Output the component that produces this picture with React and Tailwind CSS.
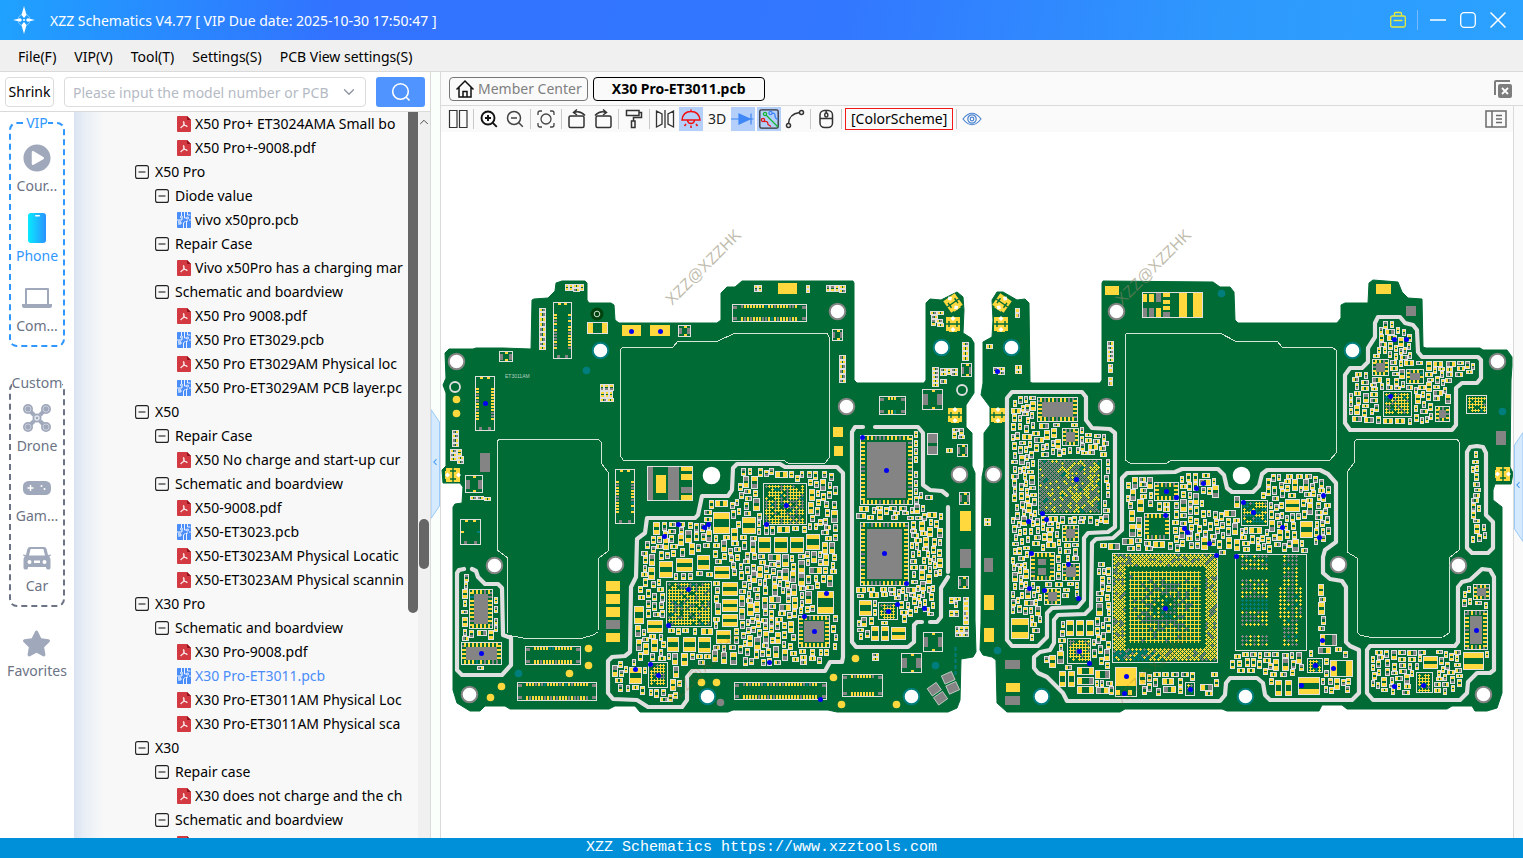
import { useState } from 'react';
import { FaPlayCircle, FaStar } from 'react-icons/fa';
import { ChevronDown, ChevronUp, ChevronLeft } from 'lucide-react';

const GREEN = '#006b35';
const GOLD = '#ffd83d';
const GRAY = '#848484';
const TEAL = '#007d7d';
const SILK = '#e0e0e0';

/* ---------- tree data ---------- */

const TREE = [
    { type: 'pdf', name: 'X50 Pro+ ET3024AMA Small bo' },
    { type: 'pdf', name: 'X50 Pro+-9008.pdf' },
    { type: 'model', name: 'X50 Pro' },
    { type: 'group', name: 'Diode value' },
    { type: 'pcb', name: 'vivo x50pro.pcb' },
    { type: 'group', name: 'Repair Case' },
    { type: 'pdf', name: 'Vivo x50Pro has a charging mar' },
    { type: 'group', name: 'Schematic and boardview' },
    { type: 'pdf', name: 'X50 Pro 9008.pdf' },
    { type: 'pcb', name: 'X50 Pro ET3029.pcb' },
    { type: 'pdf', name: 'X50 Pro ET3029AM Physical loc' },
    { type: 'pcb', name: 'X50 Pro-ET3029AM PCB layer.pc' },
    { type: 'model', name: 'X50' },
    { type: 'group', name: 'Repair Case' },
    { type: 'pdf', name: 'X50 No charge and start-up cur' },
    { type: 'group', name: 'Schematic and boardview' },
    { type: 'pdf', name: 'X50-9008.pdf' },
    { type: 'pcb', name: 'X50-ET3023.pcb' },
    { type: 'pdf', name: 'X50-ET3023AM Physical Locatic' },
    { type: 'pdf', name: 'X50-ET3023AM Physical scannin' },
    { type: 'model', name: 'X30 Pro' },
    { type: 'group', name: 'Schematic and boardview' },
    { type: 'pdf', name: 'X30 Pro-9008.pdf' },
    { type: 'pcb', name: 'X30 Pro-ET3011.pcb' },
    { type: 'pdf', name: 'X30 Pro-ET3011AM Physical Loc' },
    { type: 'pdf', name: 'X30 Pro-ET3011AM Physical sca' },
    { type: 'model', name: 'X30' },
    { type: 'group', name: 'Repair case' },
    { type: 'pdf', name: 'X30 does not charge and the ch' },
    { type: 'group', name: 'Schematic and boardview' },
    { type: 'pdf', name: '' }
];

/* ---------- board data ---------- */

const OUTLINES = [
    '445,353 449,349 473,349 476,348 503,348 531,349 532,300 534,299 548,298 555,291 556,283 562,281 585,281 587,283 587,300 589,303 611,303 614,305 615,320 619,323 717,323 721,320 721,293 727,287 735,287 742,281 853,281 854,283 854,380 857,383 924,383 926,380 926,303 930,299 941,300 957,292 963,297 964,310 963,333 971,338 974,343 974,393 966,405 966,427 972,433 972,466 975,473 975,620 976,652 973,657 961,659 960,700 957,708 948,712 837,712 828,710 733,710 728,712 640,712 635,706 615,706 609,709 510,709 505,706 485,706 480,711 470,711 457,703 453,690 453,507 455,504 462,503 463,487 460,483 443,483 442,470 446,466 446,393 443,385 446,378',
    '1102,283 1103,281 1213,282 1220,287 1230,287 1234,292 1235,320 1238,323 1337,323 1341,318 1341,305 1345,303 1368,303 1369,283 1373,280 1398,282 1402,292 1408,298 1422,299 1423,347 1426,348 1480,348 1483,350 1507,350 1512,357 1512,366 1511,380 1510,467 1513,473 1511,484 1495,484 1493,490 1493,500 1502,507 1502,693 1497,708 1487,711 1475,711 1472,706 1452,706 1447,709 1347,709 1342,705 1322,705 1319,711 1227,711 1222,709 1125,709 1120,712 1007,712 997,703 996,660 992,657 983,655 980,650 981,623 982,477 984,467 984,433 990,425 990,407 981,395 983,383 983,342 992,337 993,320 992,300 997,292 1003,292 1017,300 1025,299 1029,303 1030,382 1032,383 1100,383 1102,380'
];

const SHIELD_B = [[702,496],[698,515],[695,518],[647,518],[645,533],[637,539],[636,577],[631,587],[630,652],[625,656],[612,657],[608,661],[608,693],[613,699],[637,700],[648,707],[682,707],[687,700],[687,677],[692,671],[825,671],[830,662],[842,662],[843,657],[843,473],[837,467],[785,467],[780,464],[737,464],[733,468],[732,490],[728,496]];
const SHIELD_D = [[1007,398],[1012,392],[1082,392],[1086,397],[1086,420],[1092,428],[1110,429],[1115,433],[1115,527],[1108,532],[1088,533],[1084,538],[1084,600],[1078,607],[1052,608],[1047,613],[1047,637],[1038,646],[1012,646],[1007,640]];
const SHIELD_E = [[1034,657],[1040,652],[1050,650],[1054,643],[1054,620],[1058,615],[1085,614],[1091,608],[1092,543],[1096,539],[1113,538],[1122,530],[1122,478],[1127,473],[1175,472],[1182,469],[1218,469],[1224,475],[1227,488],[1232,492],[1253,492],[1259,486],[1262,474],[1267,470],[1320,470],[1328,474],[1336,483],[1336,542],[1325,550],[1323,557],[1323,573],[1330,579],[1342,581],[1346,587],[1346,642],[1350,646],[1359,650],[1359,693],[1352,700],[1270,700],[1265,695],[1263,683],[1257,678],[1230,678],[1226,683],[1225,695],[1220,701],[1067,701],[1063,693],[1047,677],[1038,673],[1034,668]];
const SHIELD_F = [[1375,323],[1378,317],[1400,317],[1405,323],[1413,325],[1417,330],[1418,352],[1422,357],[1478,357],[1481,360],[1481,378],[1477,383],[1462,383],[1456,388],[1456,425],[1452,430],[1350,430],[1345,423],[1345,375],[1350,368],[1362,368],[1368,362],[1368,348],[1375,337]];
const SHIELD_G = [[1467,452],[1470,447],[1477,446],[1483,447],[1486,453],[1486,515],[1493,522],[1493,548],[1488,553],[1472,553],[1467,548]];
const SHIELD_H = [[1367,650],[1370,646],[1455,646],[1458,642],[1458,587],[1462,582],[1470,580],[1482,569],[1490,570],[1494,577],[1494,670],[1490,673],[1477,673],[1468,682],[1467,693],[1460,700],[1373,700],[1367,693]];
const SHIELD_A = [[464,569],[459,570],[457,573],[457,670],[462,675],[502,675],[511,665],[511,638],[503,635],[502,588],[498,584],[485,584],[478,577],[476,571],[472,569]];
const REGION_C = [[852,427],[923,427],[923,485],[930,490],[947,492],[948,578],[941,588],[941,617],[937,622],[914,622],[914,647],[852,647]];

const SHIELD_CLOSED = [SHIELD_B, SHIELD_D, SHIELD_E, SHIELD_F, SHIELD_G, SHIELD_H];
const SHIELD_OPEN = [
    SHIELD_A,
    [[875,427],[918,427],[923,433],[923,485],[930,490],[942,491],[947,495]],
    [[948,507],[948,572]],
    [[948,577],[941,588],[941,617],[937,622],[930,622]],
    [[922,622],[917,622],[914,625],[914,642],[908,647],[856,647],[852,642],[852,432],[855,427],[863,427]]
];

const CAVITIES = [
    '620,350 623,347 673,347 678,341 718,341 735,333 827,333 829,337 829,458 825,463 788,463 783,460 623,460 620,455',
    '497,442 499,439 598,439 601,442 601,463 608,472 608,551 599,558 598,632 593,635 583,638 523,638 507,635 508,558 497,550',
    '1127,333 1220,333 1235,341 1277,341 1282,347 1332,347 1336,350 1336,453 1330,460 1172,460 1167,463 1130,463 1125,460 1125,335',
    '1357,439 1457,439 1459,442 1459,550 1449,558 1449,633 1443,637 1373,638 1360,635 1357,632 1357,558 1347,552 1347,472 1354,463 1354,442'
];

const HOLES = [
    [456,361,GRAY],[837,311,GRAY],[846,406,GRAY],[959,474,GRAY],[494,565,GRAY],[615,564,GRAY],[469,694,GRAY],
    [1116,311,GRAY],[1106,406,GRAY],[993,474,GRAY],[1338,564,GRAY],[1458,565,GRAY],[1483,694,GRAY],[1497,361,GRAY],
    [600,350,TEAL],[941,347,TEAL],[707,696,TEAL],[911,696,TEAL],[1011,347,TEAL],[1352,350,TEAL],[1041,696,TEAL],[1245,696,TEAL],
    [711,475,'#fff'],[1241,475,'#fff']
];

const BLUE_PINS = [[485,403],[631,331],[660,331],[862,437],[886,470],[884,553],[906,583],[786,505],[766,524],[708,524],[704,527],[826,593],[804,616],[814,631],[769,662],[820,699],[897,604],[888,611],[924,608],[678,524],[664,536],[688,589],[668,625],[650,664],[635,669],[658,675],[481,653],[997,371],[1076,479],[1042,513],[1046,519],[1028,521],[1031,553],[1068,564],[1029,588],[1044,590],[1078,598],[1079,651],[1089,663],[1165,608],[1126,676],[1124,693],[1190,689],[1216,555],[1236,556],[1166,491],[1176,497],[1165,515],[1184,528],[1187,532],[1209,543],[1196,488],[1203,483],[1243,502],[1253,512],[1394,339],[1406,339],[1390,396],[1323,495],[1282,527],[1319,537],[1322,640],[1315,665],[1333,668],[1301,685],[1476,630],[1394,686],[1423,685]];

const TEST_POINTS = [
    [456,399,GOLD],[456,413,GOLD],[588,648,GOLD],[588,665,GOLD],[569,673,GOLD],[501,686,GOLD],[490,697,GOLD],[855,658,GOLD],[833,677,GOLD],[841,704,GOLD],[896,704,GOLD],[716,682,GOLD],[701,682,GOLD],
    [720,702,GRAY],[586,370,TEAL],[518,673,TEAL],[935,665,TEAL],[1221,293,TEAL],[997,650,TEAL],[1502,411,TEAL]
];

const GOLD_PADS = [[622,325,19,11],[650,325,20,11],[778,283,19,11],[833,427,10,10],[834,446,9,10],[606,581,14,10],[606,594,14,10],[606,607,14,10],[606,633,14,9],[960,511,11,20],[984,595,10,15],[984,628,10,14],[1006,683,14,9],[1105,286,14,9],[1376,284,15,10],[1116,667,21,19],[1116,690,4,5],[1128,690,4,5],[656,475,10,18],[681,467,11,4],[681,474,11,6],[681,495,11,5],[1142,294,5,8],[1149,294,5,8],[1163,293,7,4],[1163,300,7,4],[1163,306,7,4],[1156,308,5,10],[1179,293,8,24],[1193,293,9,24]];
const GRAY_PADS = [[606,620,14,9],[960,549,11,19],[984,558,9,14],[1005,660,15,9],[1005,696,15,9],[1406,306,10,10],[1496,431,10,14],[480,453,10,19],[647,467,6,34],[668,467,11,34],[681,487,11,6],[928,433,9,10],[928,446,9,8],[1142,308,5,9],[1149,308,5,9],[1156,293,5,9],[1163,312,7,5]];
const FRAMES = [[647,466,46,35],[1142,292,61,26],[927,433,11,22],[1115,667,22,30]];

// x, y, w, h, then the centre pad inset
const QFNS = [[860,435,53,70,7],[860,522,49,64,7],[469,589,24,40,5],[461,642,41,23,5],[798,615,32,33,6],[1037,397,41,25,5],[1062,428,17,18,4],[1062,525,17,17,4],[1062,563,18,18,4],[1044,588,17,17,4],[1154,482,25,19,0],[1144,513,26,27,0],[1030,552,25,29,0],[1372,359,17,17,4],[1406,369,18,15,4],[1435,406,15,16,4],[1473,584,17,16,4],[1464,610,24,40,6]];

// x, y, w, h, share of gray, share of teal
const PLAIDS = [[763,483,44,42,0.25,0.08],[666,581,46,46,0.25,0.05],[648,662,20,26,0.2,0],[878,602,20,18,0.2,0],[1067,638,24,26,0.25,0],[1383,391,29,26,0.25,0.08],[1466,395,21,19,0.05,0.15],[1241,500,27,26,0.05,0.45],[1416,672,17,21,0.2,0.15],[1307,658,16,15,0.1,0.4],[1185,682,10,14,0.3,0.1]];

// x, y, w, h, vertical
const CONNECTORS = [[553,302,19,57,1],[475,376,20,55,1],[615,469,20,55,1],[732,304,75,18,0],[879,396,27,19,0],[525,646,56,19,0],[517,682,80,19,0],[734,682,93,18,0],[842,674,41,23,0],[460,519,21,26,1]];

const CRYSTALS = [[465,475,18,18],[922,389,21,21],[923,632,20,20],[901,653,21,20],[961,363,11,14],[957,444,11,13],[959,492,11,13],[958,576,11,13],[499,351,14,11],[678,325,13,12],[832,329,11,12]];

const BIG_CAPS = [[713,512,17,22],[742,517,14,17],[758,537,13,16],[774,537,14,16],[790,537,14,16],[806,534,14,16],[722,582,16,14],[722,599,16,13],[722,614,16,13],[716,630,15,14],[698,637,13,16],[714,566,16,13],[697,555,13,15],[817,591,17,23],[859,600,13,16],[891,627,15,13],[659,561,14,17],[676,558,17,14],[634,606,10,18],[647,620,16,13],[667,637,12,15],[683,637,13,15],[629,667,13,17],[1300,521,13,17],[1285,499,15,13],[1320,634,17,12],[1330,660,23,17],[1298,677,22,18],[1423,656,15,13],[1463,652,21,18],[1011,618,18,21],[1066,620,8,16],[1076,620,8,16],[1086,620,8,16],[1077,667,17,8],[1077,677,17,8],[1077,686,17,8],[1095,670,15,9],[587,322,21,12],[871,626,8,15],[881,626,8,15],[1059,671,7,16],[1068,671,7,16],[1275,680,7,16],[1285,680,7,16]];

// loose rows of small parts outside the shields
const STRIPS = [[539,308,8,42],[565,284,19,8],[600,384,15,19],[452,430,8,17],[450,449,15,15],[469,496,22,6],[754,285,11,8],[806,285,5,8],[826,285,22,8],[839,355,8,29],[930,311,15,8],[931,319,13,9],[962,342,8,19],[932,367,8,20],[940,368,20,10],[940,379,8,8],[952,428,14,12],[946,448,8,8],[963,597,7,28],[949,597,12,12],[949,610,12,10],[955,626,14,13],[872,653,9,8],[986,344,8,8],[1015,308,6,11],[993,367,12,8],[1015,365,8,11],[1107,341,8,23],[1108,364,6,12],[1108,377,6,12],[984,518,8,8]];

const CONTACTS = [[946,317,0],[948,408,0],[446,468,90],[994,317,0],[991,408,0],[1496,467,90],[946,296,-35],[995,296,35]];

const BLANKS = [[1220,555,14,105],[1309,545,9,105],[1096,552,16,10],[1326,586,16,46],[1140,664,90,8],[732,468,6,26],[925,500,20,12],[1204,498,30,12],[1196,672,14,12],[1348,384,6,8]];

function inside(poly, x, y) {
    let hit = false;
    for (let i = 0, j = poly.length - 1; i < poly.length; j = i++) {
        const [xi, yi] = poly[i];
        const [xj, yj] = poly[j];
        if ((yi > y) !== (yj > y) && x < ((xj - xi) * (y - yi)) / (yj - yi) + xi) hit = !hit;
    }
    return hit;
}

function buildBoard() {
    const layers = { fill: '', gold: '', gray: '', teal: '', silk: '' };
    const W = 1090;
    const taken = new Uint8Array(W * 720);
    let seed = 4021;
    const rnd = () => {
        seed = (seed + 0x6d2b79f5) | 0;
        let t = Math.imul(seed ^ (seed >>> 15), 1 | seed);
        t = (t + Math.imul(t ^ (t >>> 7), 61 | t)) ^ t;
        return ((t ^ (t >>> 14)) >>> 0) / 4294967296;
    };
    const rect = (layer, x, y, w, h) => {
        layers[layer] += `M${x} ${y}h${w}v${h}h${-w}z`;
    };
    const frame = (x, y, w, h) => {
        layers.silk += `M${x} ${y}h${w}v${h}h${-w}zM${x + 1} ${y + 1}v${h - 2}h${w - 2}v${-(h - 2)}z`;
    };
    const plus = (layer, x, y) => {
        rect(layer, x, y + 1, 3, 1);
        rect(layer, x + 1, y, 1, 3);
    };
    const mark = (x, y, w, h) => {
        for (let j = y; j < y + h; j++) for (let i = x; i < x + w; i++) taken[(j - 130) * W + i - 436] = 1;
    };
    const free = (x, y, w, h) => {
        for (let j = y; j < y + h; j++) for (let i = x; i < x + w; i++) if (taken[(j - 130) * W + i - 436]) return false;
        return true;
    };
    const pick = (gray, teal) => {
        const r = rnd();
        return r < gray ? 'gray' : r < gray + teal ? 'teal' : 'gold';
    };

    // two pads with the body between them
    const part = (x, y, w, h) => {
        const tone = rnd();
        const a = tone < 0.3 ? 'gray' : 'gold';
        const b = tone > 0.75 ? 'gray' : 'gold';
        frame(x, y, w, h);
        if (w >= h) {
            const p = Math.max(2, Math.floor((w - 2) * 0.4));
            rect(a, x + 1, y + 1, p, h - 2);
            rect(b, x + w - 1 - p, y + 1, p, h - 2);
        } else {
            const p = Math.max(2, Math.floor((h - 2) * 0.4));
            rect(a, x + 1, y + 1, w - 2, p);
            rect(b, x + 1, y + h - 1 - p, w - 2, p);
        }
    };

    const fillArea = (test, x0, y0, x1, y1, sizes, skip) => {
        for (let y = y0; y < y1; y++) {
            for (let x = x0; x < x1; x++) {
                if (taken[(y - 130) * W + x - 436]) continue;
                if (rnd() < skip) continue;
                const start = Math.floor(rnd() * sizes.length);
                for (let k = 0; k < 3; k++) {
                    const [w, h] = k === 2 ? sizes[0] : sizes[(start + k) % sizes.length];
                    if (x + w > x1 || y + h > y1 || !free(x, y, w, h) || !test(x, y, w, h)) continue;
                    part(x, y, w, h);
                    mark(x, y, w + (skip ? 1 : 0), h + (rnd() < 0.6 && skip ? 1 : 0));
                    break;
                }
            }
        }
    };

    const qfn = (x, y, w, h, inset) => {
        rect('fill', x, y, w, h);
        frame(x, y, w, h);
        const len = w > 22 ? 4 : 3;
        for (let i = x + 3; i < x + w - 4; i += 4) {
            rect(pick(0.3, 0.03), i, y + 1, 2, len);
            rect(pick(0.3, 0.03), i, y + h - 1 - len, 2, len);
        }
        for (let j = y + 3; j < y + h - 4; j += 4) {
            rect(pick(0.2, 0.03), x + 1, j, len, 2);
            rect(pick(0.2, 0.03), x + w - 1 - len, j, len, 2);
        }
        if (inset) rect('gray', x + inset, y + inset, w - inset * 2, h - inset * 2);
        mark(x - 1, y - 1, w + 2, h + 2);
    };

    QFNS.forEach((q) => qfn(...q));
    rect('gray', 1038, 559, 8, 6);
    rect('gray', 1038, 568, 8, 7);

    PLAIDS.forEach(([x, y, w, h, g, t]) => {
        frame(x, y, w, h);
        for (let j = y + 2; j < y + h - 3; j += 3) {
            for (let i = x + 2; i < x + w - 3; i += 3) if (rnd() > 0.1) plus(pick(g, t), i, j);
        }
        mark(x - 1, y - 1, w + 2, h + 2);
    });

    // staggered ball grids
    const stagger = (x, y, w, h, tone, skip) => {
        for (let j = 0; j < h - 3; j += 2) {
            for (let i = (j / 2) % 2 ? 2 : 0; i < w - 3; i += 4) {
                if (skip && skip(i, j)) continue;
                plus(tone(i, j), x + i, y + j);
            }
        }
    };
    frame(1038, 459, 64, 56);
    stagger(1039, 460, 63, 55, (i, j) => {
        const m = Math.sin(i * 0.35) + Math.cos(j * 0.3 + i * 0.1);
        if (m > 1.7) return 'teal';
        return rnd() < 0.1 + i / 180 ? 'gold' : 'gray';
    });
    mark(1037, 458, 66, 58);

    frame(1112, 553, 106, 110);
    stagger(1113, 554, 106, 109, (i, j) => {
        if (j > 94 && i < 50 && rnd() < 0.4) return 'teal';
        return rnd() < 0.8 ? 'gold' : 'gray';
    }, (i, j) => i > 11 && i < 91 && j > 10 && j < 94);
    for (let j = 0; j < 72; j += 4) {
        for (let i = 0; i < 70; i += 4) {
            const ring = Math.min(i, j, 68 - i, 68 - j);
            if (ring > 22 && rnd() < 0.25) continue;
            const tone = ring > 22 ? pick(0.25, 0.15) : pick(ring > 10 ? 0.5 : 0.15, 0);
            plus(tone, 1129 + i, 571 + j);
            if (ring <= 22) {
                rect(tone, 1132 + i, 572 + j, 1, 1);
                rect(tone, 1130 + i, 574 + j, 1, 1);
            }
        }
    }
    mark(1111, 552, 108, 112);

    frame(1235, 554, 72, 97);
    for (let j = 0; j < 92; j += 4) {
        const inBand = j < 15 || (j > 23 && j < 70) || j > 79;
        for (let i = 0; i < 28; i += 4) if (inBand) plus(j > 43 && j < 53 ? 'teal' : pick(0.4, 0.03), 1241 + i, 555 + j);
        for (let i = 0; i < 16; i += 4) plus(i === 8 ? 'gray' : pick(0.35, 0.1), 1283 + i, 555 + j);
        if (j > 28 && j < 64) {
            plus('gold', 1279, 555 + j);
            plus(pick(0.3, 0), 1299, 555 + j);
        }
    }
    mark(1234, 553, 75, 99);

    CONNECTORS.forEach(([x, y, w, h, vertical]) => {
        frame(x, y, w, h);
        if (vertical) {
            for (let j = y + 12; j < y + h - 11; j += 3) {
                rect(pick(0.2, 0.05), x + 1, j, 3, 2);
                rect(pick(0.3, 0.25), x + w - 4, j, 3, 2);
            }
            rect('gold', x + 5, y + 1, 3, 2);
            rect('gold', x + w - 8, y + 1, 3, 2);
            rect('gray', x + 4, y + h - 4, 3, 3);
            rect('gray', x + w - 7, y + h - 4, 3, 3);
        } else {
            for (let i = x + 9; i < x + w - 9; i += 3) {
                rect(pick(0.25, 0.05), i, y + 1, 2, 3);
                rect(pick(0.25, 0.03), i, y + h - 5, 2, 4);
            }
            rect('gray', x + 1, y + 2, 4, 3);
            rect('gray', x + w - 5, y + 2, 4, 3);
            rect('gray', x + 1, y + h - 5, 4, 3);
            rect('gray', x + w - 5, y + h - 5, 4, 3);
        }
    });

    CRYSTALS.forEach(([x, y, w, h]) => {
        frame(x, y, w, h);
        const p = Math.round(w * 0.22);
        rect('gray', x + 1, y + Math.round(h * 0.25), p, Math.round(h * 0.5));
        rect('gray', x + w - 1 - p, y + Math.round(h * 0.25), p, Math.round(h * 0.5));
        rect('gold', x + Math.round(w / 2) - 1, y + 1, 3, 2);
        rect('gold', x + Math.round(w / 2) - 1, y + h - 3, 3, 2);
    });

    BIG_CAPS.forEach(([x, y, w, h]) => {
        frame(x, y, w, h);
        if (h >= w - 4) {
            const p = Math.round(h * 0.27);
            rect('gold', x + 1, y + 1, w - 2, p);
            rect('gold', x + 1, y + h - 1 - p, w - 2, p);
        } else {
            const p = Math.round(w * 0.25);
            rect('gold', x + 1, y + 1, p, h - 2);
            rect(rnd() < 0.5 ? 'gray' : 'gold', x + w - 1 - p, y + 1, p, h - 2);
        }
        mark(x - 1, y - 1, w + 2, h + 2);
    });

    GOLD_PADS.forEach((r) => rect('gold', ...r));
    GRAY_PADS.forEach((r) => rect('gray', ...r));
    FRAMES.forEach(([x, y, w, h]) => {
        frame(x, y, w, h);
        mark(x - 1, y - 1, w + 2, h + 2);
    });
    BLANKS.forEach((r) => mark(...r));

    const small = [[5, 7], [8, 5], [5, 8], [12, 7], [7, 5], [7, 13], [13, 7], [6, 12], [7, 5], [5, 9], [4, 7]];
    const tiny = [[4, 7], [7, 5], [5, 8], [8, 5], [6, 10], [10, 6], [7, 4]];
    [[SHIELD_B, small], [SHIELD_D, tiny], [SHIELD_E, small], [SHIELD_F, tiny], [SHIELD_G, tiny], [SHIELD_H, tiny], [SHIELD_A, tiny], [REGION_C, tiny]].forEach(([poly, sizes]) => {
        const xs = poly.map((p) => p[0]);
        const ys = poly.map((p) => p[1]);
        const test = (x, y, w, h) => [[-4, -4], [w + 4, -4], [-4, h + 4], [w + 4, h + 4]].every(([dx, dy]) => inside(poly, x + dx, y + dy));
        fillArea(test, Math.min(...xs), Math.min(...ys), Math.max(...xs), Math.max(...ys), sizes, 0.7);
    });
    STRIPS.forEach(([x, y, w, h]) => fillArea(() => true, x, y, x + w, y + h, w <= 8 ? [[w - 1, 4], [w - 1, 5]] : [[4, 7], [7, 4], [5, 7]], 0));

    return layers;
}

const LAYERS = buildBoard();
const toPoints = (list) => list.map((p) => p.join(',')).join(' ');

const BoardView = () => (
    <svg
        viewBox="441 132 1072 706"
        preserveAspectRatio="xMinYMin meet"
        className="block h-full w-full"
        role="img"
        aria-label="X30 Pro-ET3011 board view"
    >
        {OUTLINES.map((pts) => (
            <polygon key={pts.slice(0, 7)} points={pts} fill={GREEN} stroke={GREEN} strokeWidth="1" strokeLinejoin="round" />
        ))}
        <g fill="none" stroke="#d5e5da" strokeWidth="1" shapeRendering="crispEdges">
            {CAVITIES.map((pts) => <polygon key={pts.slice(0, 7)} points={pts} />)}
        </g>
        <g fill="none" stroke={SILK} strokeWidth="4.2" strokeLinejoin="round" strokeLinecap="round">
            {SHIELD_CLOSED.map((list) => <polygon key={list[0].join()} points={toPoints(list)} />)}
            {SHIELD_OPEN.map((list) => <polyline key={list[0].join()} points={toPoints(list)} />)}
        </g>
        <g shapeRendering="crispEdges">
            <path d={LAYERS.fill} fill={GREEN} />
            <path d={LAYERS.teal} fill={TEAL} />
            <path d={LAYERS.gray} fill={GRAY} />
            <path d={LAYERS.gold} fill={GOLD} />
            <path d={LAYERS.silk} fill={SILK} />
        </g>
        {CONTACTS.map(([x, y, turn]) => (
            <g key={`${x}-${y}`} transform={`rotate(${turn} ${x + 7} ${y + 7})`}>
                <path d={`M${x} ${y}h14v14h-3v1h-8v-1h-3z`} fill={GOLD} />
                <path d={`M${x} ${y + 7}h14M${x + 3} ${y + 4}v6M${x + 11} ${y + 4}v6`} stroke={GREEN} strokeWidth="1.4" />
                <path d={`M${x + 7} ${y - 1}l2.5 2.5-2.5 2.5-2.5-2.5zM${x + 7} ${y + 10}l2.5 2.5-2.5 2.5-2.5-2.5z`} fill="#fff" />
            </g>
        ))}
        {[[937, 694, -35], [950, 683, -24]].map(([x, y, turn]) => (
            <g key={x} transform={`rotate(${turn} ${x} ${y})`} fill={GRAY} stroke={SILK} strokeWidth="0.7">
                <rect x={x - 5} y={y - 10} width="11" height="9" />
                <rect x={x - 5} y={y + 1} width="11" height="9" />
            </g>
        ))}
        <path d="M955.5 647v28" stroke={TEAL} strokeWidth="2" strokeDasharray="4 2" />
        {TEST_POINTS.map(([x, y, tone]) => <circle key={`${x}-${y}`} cx={x + 0.5} cy={y + 0.5} r="3.8" fill={tone} />)}
        {HOLES.map(([x, y, tone]) => <circle key={`${x}-${y}`} cx={x + 0.5} cy={y + 0.5} r="7.8" fill="#fff" stroke={tone} strokeWidth="2" />)}
        <g fill="none" stroke={SILK} strokeWidth="1.8">
            <circle cx="455" cy="387" r="5" />
            <circle cx="962" cy="390" r="5" />
        </g>
        <circle cx="597" cy="314" r="6.5" fill="#00420d" />
        <circle cx="597" cy="314" r="2.8" fill="none" stroke="#cfe0cf" strokeWidth="1" />
        {BLUE_PINS.map(([x, y]) => <circle key={`${x}-${y}`} cx={x + 0.5} cy={y + 0.5} r="2.5" fill="#0000f0" />)}
        <text x="505" y="378" fontSize="5" fill="#b9cfc0" className="font-['Liberation_Sans']">ET3011AM</text>
        <g className="font-['Liberation_Sans']" fontSize="16" fill="#8a8468" fillOpacity="0.55">
            <text transform="translate(672 306) rotate(-45)">XZZ@XZZHK</text>
            <text transform="translate(1122 306) rotate(-45)">XZZ@XZZHK</text>
        </g>
        <g className="font-['Liberation_Sans']" fontSize="16" fill="#8a5a10" fillOpacity="0.25">
            <text transform="translate(672 706) rotate(-45)">XZZ@XZZHK</text>
            <text transform="translate(1122 706) rotate(-45)">XZZ@XZZHK</text>
        </g>
    </svg>
);

/* ---------- icons ---------- */

const Line = ({ size = 20, color = '#333', width = 1.5, children }) => (
    <svg width={size} height={size} viewBox="0 0 20 20" fill="none" stroke={color} strokeWidth={width}>{children}</svg>
);

const Logo = () => (
    <svg width="24" height="30" viewBox="0 0 24 30" fill="#fff">
        <circle cx="12" cy="15" r="6" fill="none" stroke="#bfe3ff" strokeWidth="1" strokeOpacity="0.6" />
        <path d="M12 1l2.5 9-2.5 3-2.5-3zM12 29l2.5-9-2.5-3-2.5 3zM1 15l7.5-1.8L10 15l-1.5 1.8zM23 15l-7.5-1.8L14 15l1.500 1.8z" />
        <circle cx="12" cy="15" r="1" />
    </svg>
);

const PdfIcon = () => (
    <svg width="14" height="16" viewBox="0 0 14 16" className="shrink-0">
        <path d="M1 0h9l4 4v11a1 1 0 0 1-1 1H1a1 1 0 0 1-1-1V1a1 1 0 0 1 1-1z" fill="#d23940" />
        <path d="M10 0l4 4h-3a1 1 0 0 1-1-1z" fill="#8e1118" />
        <path d="M6.5 5.5c1.2 0 .6 2.5-.4 4.3-.8 1.5-1.9 2.4-2.3 1.9-.5-.8 1.8-2 3.7-2.2 1.5-.2 2.9.1 2.8.8-.1.8-1.6.1-2.6-1.1C6.8 8 5.8 5.5 6.5 5.5z" fill="none" stroke="#fff" strokeWidth="0.9" />
    </svg>
);

const PcbIcon = () => (
    <svg width="14" height="16" viewBox="0 0 14 16" className="shrink-0">
        <rect width="14" height="16" rx="1" fill="#4a8df8" />
        <g fill="none" stroke="#fff" strokeWidth="0.9">
            <path d="M4.5 0v4M7.5 0v6h2M10.5 0v3h3M0 8h5v-2M1 12h3v-2M6.5 16v-5l2-2M9.5 16V9h1.5M12 8h2" />
            <circle cx="4.5" cy="5" r="1" />
            <circle cx="10.5" cy="6" r="1" />
            <circle cx="2.5" cy="10" r="1" />
        </g>
    </svg>
);

const PhoneIcon = () => (
    <svg width="28" height="32" viewBox="0 0 28 32">
        <defs>
            <linearGradient id="phoneFill" x1="0" x2="1">
                <stop offset="0" stopColor="#08eaff" />
                <stop offset="1" stopColor="#2b92ff" />
            </linearGradient>
        </defs>
        <rect x="5" y="1" width="18" height="30" rx="3" fill="url(#phoneFill)" />
        <rect x="12" y="3" width="5" height="1.5" rx="0.7" fill="#fff" />
    </svg>
);

const LaptopIcon = () => (
    <svg width="30" height="22" viewBox="0 0 30 22" fill="#a0a8bb">
        <path d="M4 1h22a1 1 0 0 1 1 1v15h3v2q0 2-2 2H2q-2 0-2-2v-2h3V2a1 1 0 0 1 1-1zm1 2v14h20V3z" fillRule="evenodd" />
    </svg>
);

const DroneIcon = () => (
    <svg width="28" height="28" viewBox="0 0 28 28">
        <g fill="#a0a8bb">
            <circle cx="5" cy="5" r="5" /><circle cx="23" cy="5" r="5" />
            <circle cx="5" cy="23" r="5" /><circle cx="23" cy="23" r="5" />
            <circle cx="14" cy="14" r="4.5" />
        </g>
        <path d="M5 5l6 6M23 5l-6 6M5 23l6-6M23 23l-6-6" stroke="#a0a8bb" strokeWidth="4" />
        <g fill="none" stroke="#e4e7ee" strokeWidth="0.6">
            <circle cx="5" cy="5" r="3" /><circle cx="23" cy="5" r="3" />
            <circle cx="5" cy="23" r="3" /><circle cx="23" cy="23" r="3" />
            <circle cx="14" cy="14" r="2" strokeWidth="1.4" />
        </g>
    </svg>
);

const GamepadIcon = () => (
    <svg width="28" height="16" viewBox="0 0 28 16">
        <rect y="1" width="28" height="14" rx="5.5" fill="#a0a8bb" />
        <path d="M7.5 5v6M4.5 8h6" stroke="#fff" strokeWidth="1.5" />
        <circle cx="18.5" cy="6" r="1" fill="#fff" />
        <circle cx="21.5" cy="9" r="1" fill="#fff" />
    </svg>
);

const CarIcon = () => (
    <svg width="28" height="24" viewBox="0 0 28 24" fill="#a0a8bb">
        <path fillRule="evenodd" d="M7 1h14q2 0 2.6 2L25 9l3-.5q0 2-2 2 1.5 1 1.5 3V22q0 1.5-2 1.5T23 22v-1H5v1q0 1.5-2.2 1.5T.5 22v-8.5q0-2 1.5-3-2 0-2-2L3 9l1.4-6Q5 1 7 1zm.6 2L6 9.5h16L20.4 3zM6.5 14a2 2 0 1 0 0 4 2 2 0 0 0 0-4zm15 0a2 2 0 1 0 0 4 2 2 0 0 0 0-4zM11 14.5v2.5h6v-2.5z" />
    </svg>
);

const Collapse = () => (
    <button className="shrink-0" aria-label="Collapse">
        <svg width="14" height="14" viewBox="0 0 14 14" fill="none" stroke="#222" strokeWidth="1.1">
            <rect x="0.6" y="0.6" width="12.8" height="12.8" rx="2" />
            <path d="M3.5 7h7" />
        </svg>
    </button>
);

/* ---------- pieces ---------- */

const TreeRow = ({ item, selected, onSelect }) => {
    if (item.type === 'model') {
        return <div className="flex h-6 items-center gap-1.5 pl-[61px]"><Collapse />{item.name}</div>;
    }
    if (item.type === 'group') {
        return <div className="flex h-6 items-center gap-1.5 pl-[81px]"><Collapse />{item.name}</div>;
    }
    return (
        <button
            onClick={onSelect}
            className={`flex h-6 w-full items-center gap-1 pl-[103px] text-left ${selected ? 'text-[#4a8df8]' : ''}`}
        >
            {item.type === 'pdf' ? <PdfIcon /> : <PcbIcon />}
            <span>{item.name}</span>
        </button>
    );
};

const NavItem = ({ icon, label, active }) => (
    <button className={`flex flex-col items-center gap-1 leading-5 ${active ? 'text-[#2f97ff]' : 'text-[#6b7385]'}`}>
        <span className="flex h-7 items-center">{icon}</span>
        {label}
    </button>
);

const Tool = ({ label, active, children }) => (
    <button
        aria-label={label}
        className={`flex h-6 w-6 shrink-0 items-center justify-center ${active ? 'bg-[#b5cffb]' : ''}`}
    >
        {children}
    </button>
);

const Sep = () => <span className="mx-px h-5 w-px shrink-0 bg-[#c9c9c9]" />;

const Toolbar = () => (
    <div className="flex h-[26px] shrink-0 items-center gap-0.5 bg-[#fafafa] pl-[5px] pr-1.5">
        <Tool label="Split view"><Line width={1.2}><path d="M1.5 1.5h7.5v17H1.5zM11.5 1.5h7.5v17h-7.5z" /></Line></Tool>
        <Sep />
        <Tool label="Zoom in"><Line color="#111" width={1.9}><circle cx="9" cy="9" r="6.5" /><path d="M13.8 13.8l4 4M9 6v6M6 9h6" /></Line></Tool>
        <Tool label="Zoom out"><Line color="#444" width={1.5}><circle cx="9" cy="9" r="6.5" /><path d="M13.8 13.8l4 4M6 9h6" /></Line></Tool>
        <Sep />
        <Tool label="Fit"><Line color="#444" width={1.3}><circle cx="10" cy="10" r="5" /><path d="M2 6V4q0-2 2-2h2M14 2h2q2 0 2 2v2M18 14v2q0 2-2 2h-2M6 18H4q-2 0-2-2v-2" /></Line></Tool>
        <Sep />
        <Tool label="Rotate left"><Line><rect x="2" y="7" width="15" height="11.5" rx="1.5" /><path d="M7 3.5q6-2.5 11 3M10 .5L6.5 3.5 10 6" /></Line></Tool>
        <Tool label="Rotate right"><Line><rect x="3" y="7" width="15" height="11.5" rx="1.5" /><path d="M13 3.5q-6-2.5-11 3M10 .5l3.5 3L10 6" /></Line></Tool>
        <Sep />
        <Tool label="Paint"><Line><path d="M2.5 1.5H15v5H2.5zM15 3.5h2.5v5H9.5v3M7.5 12H11v6.5H7.5z" /></Line></Tool>
        <Sep />
        <Tool label="Mirror"><Line width={1.3}><path d="M10 1v18M1.5 2v16l5.5-3V5zM18.5 2v16l-5.5-3V5z" /></Line></Tool>
        <Tool label="Light" active><Line color="#f01010" width={1.5}><path d="M1 11q1-8.5 9-8.5T19 11zM6.5 11.5q.5 3 3.5 3t3.5-3M10 .5v2M10 16.5v2.5M5 15l-1.5 2M15 15l1.5 2" /></Line></Tool>
        <button className="h-6 w-6 shrink-0 text-center leading-6 text-[#222]">3D</button>
        <Tool label="Diode" active>
            <svg width="24" height="20" viewBox="0 0 24 20" fill="#3f86f6" stroke="#3f86f6" strokeWidth="1.2"><path d="M0 10h22.5M20 4.5v11" /><path d="M8 5l11 5-11 5z" /></svg>
        </Tool>
        <Tool label="Net colors" active>
            <Line width={1.3}>
                <path d="M12 .8H2.5A1.7 1.7 0 0 0 .8 2.5v15a1.7 1.7 0 0 0 1.7 1.7h15a1.7 1.7 0 0 0 1.7-1.7v-15A1.7 1.7 0 0 0 17.5 .8H12" />
                <path d="M7 6l12 12" stroke="#15b52d" /><circle cx="6" cy="5" r="1.6" stroke="#15b52d" />
                <circle cx="11.5" cy="4" r="1.6" stroke="#3f86f6" /><path d="M13 4.5q3-1 3 2t3 4" stroke="#3f86f6" />
                <circle cx="4" cy="11" r="1.6" stroke="#e01818" /><path d="M5 12.5q4-1 4 3l3 2" stroke="#e01818" />
            </Line>
        </Tool>
        <Tool label="Route"><Line><circle cx="3.5" cy="16.5" r="2" /><circle cx="16.5" cy="3.5" r="2" /><path d="M3.5 14.5Q4 5 14.5 3.5" /></Line></Tool>
        <Sep />
        <Tool label="Mouse"><Line><rect x="4" y="1.5" width="12.5" height="17" rx="4.5" /><path d="M4 9.5h12.5M10.2 2v2" /><rect x="8.8" y="4" width="3" height="4" rx="1.5" /></Line></Tool>
        <Sep />
        <button className="h-[22px] shrink-0 border border-[#f01818] px-[5px] text-sm leading-5 text-black">[ColorScheme]</button>
        <Sep />
        <Tool label="Show"><Line color="#4c84d0" width={1.2}><path d="M1 10q9-11.5 18 0-9 11.5-18 0z" /><circle cx="10" cy="10" r="4.2" /><circle cx="10" cy="10" r="1.8" /></Line></Tool>
        <button aria-label="Side panel" className="ml-auto shrink-0">
            <svg width="22" height="18" viewBox="0 0 22 18" fill="none" stroke="#6b6b6b" strokeWidth="1.5"><path d="M1 1h20v16H1zM7 1v16M11 5.5h6M11 9h6M11 12.5h6" /></svg>
        </button>
    </div>
);

const SideHandle = ({ flip }) => (
    <button aria-label="Toggle panel" className="relative h-[110px] w-[9px]">
        <svg width="9" height="110" viewBox="0 0 9 110" className={flip ? '-scale-x-100' : ''}>
            <path d="M0 .5L8.5 13v84L0 109.5z" fill="#d5eaff" stroke="#9ccaf8" strokeWidth="1" />
        </svg>
        <ChevronLeft size={10} color="#2f8ff0" strokeWidth={2.5} className="absolute -left-px top-[48px]" />
    </button>
);

const App = () => {
    const [selected, setSelected] = useState('X30 Pro-ET3011.pcb');
    const [query, setQuery] = useState('');

    return (
        <div className="flex h-screen flex-col overflow-hidden bg-white text-sm text-black font-['Noto_Sans','Open_Sans',sans-serif]">
            <header className="flex h-10 shrink-0 items-center bg-[linear-gradient(100deg,#1fa2ff_0%,#3272ff_22%,#3277ff_55%,#2e98fd_80%,#2ba2ff_100%)] px-3 text-white">
                <Logo />
                <h1 className="ml-3.5 pt-px text-sm font-normal">XZZ Schematics V4.77 [ VIP Due date: 2025-10-30 17:50:47 ]</h1>
                <div className="ml-auto flex items-center">
                    <button aria-label="Toolbox">
                        <svg width="16" height="18" viewBox="0 0 16 18" fill="none" stroke="#e6ea3a" strokeWidth="1.3"><rect x="0.7" y="5" width="14.6" height="11" rx="1.5" /><path d="M4.5 5V2.5q0-1 1-1h5q1 0 1 1V5M3.5 9.5h9" /></svg>
                    </button>
                    <span className="mx-[11px] h-5 w-px bg-[#7ab8ff]" />
                    <div className="flex items-center gap-3.5 pl-px pr-[5px]">
                        <button aria-label="Minimize"><svg width="16" height="16" viewBox="0 0 16 16" stroke="#fff" strokeWidth="1.5"><path d="M0 8h16" /></svg></button>
                        <button aria-label="Maximize"><svg width="16" height="16" viewBox="0 0 16 16" fill="none" stroke="#fff" strokeWidth="1.3"><rect x="0.7" y="0.7" width="14.6" height="14.6" rx="3.5" /></svg></button>
                        <button aria-label="Close"><svg width="16" height="16" viewBox="0 0 16 16" stroke="#fff" strokeWidth="1.5"><path d="M.5.5l15 15M15.5.5l-15 15" /></svg></button>
                    </div>
                </div>
            </header>

            <nav className="flex h-8 shrink-0 items-center gap-[18px] border-b border-[#dadada] bg-[#f0f0f0] px-[18px] pt-0.5">
                <button>File(F)</button>
                <button>VIP(V)</button>
                <button>Tool(T)</button>
                <button>Settings(S)</button>
                <button>PCB View settings(S)</button>
            </nav>

            <div className="flex min-h-0 flex-1">
                <aside className="flex w-[431px] shrink-0 flex-col border-r border-[#dadada]">
                    <div className="flex h-10 shrink-0 items-center border-b border-[#dadada] pl-[5px] pr-[5px] pt-px">
                        <button className="h-[30px] w-[49px] shrink-0 whitespace-nowrap rounded border border-[#dcdcdc] text-center">Shrink</button>
                        <div className="relative ml-2.5 flex-1">
                            <input
                                aria-label="Search model"
                                value={query}
                                onChange={(e) => setQuery(e.target.value)}
                                placeholder="Please input the model number or PCB"
                                className="h-[30px] w-full rounded border border-[#dcdcdc] pl-2 pr-7 placeholder:text-[#b5bac4]"
                            />
                            <ChevronDown size={18} color="#8e95a3" strokeWidth={1.8} className="absolute right-2 top-1.5" />
                        </div>
                        <button aria-label="Search" className="ml-2.5 flex h-[30px] w-[49px] shrink-0 items-center justify-center rounded-[3px] bg-[#5094ff]">
                            <Line color="#fff" width={1.6}><circle cx="9.5" cy="9.5" r="7.8" /><path d="M15 15l3.5 3.5" /></Line>
                        </button>
                    </div>

                    <div className="flex min-h-0 flex-1">
                        <div className="flex w-[74px] shrink-0 flex-col overflow-hidden px-[9px] pt-px">
                            <fieldset className="flex flex-col items-center rounded-lg border-2 border-dashed border-[#2f97ff] pb-[9px]">
                                <legend className="mx-auto leading-5 text-[#2f97ff]">VIP</legend>
                                <div className="flex flex-col items-center gap-[18px] pt-[11px]">
                                    <NavItem icon={<FaPlayCircle size={28} color="#a0a8bb" />} label="Cour..." />
                                    <NavItem icon={<PhoneIcon />} label="Phone" active />
                                    <NavItem icon={<LaptopIcon />} label="Com..." />
                                </div>
                            </fieldset>
                            <fieldset className="mt-[26px] flex flex-col items-center rounded-lg border-2 border-dashed border-[#6b7385] pb-[9px]">
                                <legend className="mx-auto leading-5 text-[#6b7385]">Custom</legend>
                                <div className="flex flex-col items-center gap-[18px] pt-[11px]">
                                    <NavItem icon={<DroneIcon />} label="Drone" />
                                    <NavItem icon={<GamepadIcon />} label="Gam..." />
                                    <NavItem icon={<CarIcon />} label="Car" />
                                </div>
                            </fieldset>
                            <div className="-mx-2 mt-[22px] flex justify-center">
                                <NavItem icon={<FaStar size={29} color="#a0a8bb" />} label="Favorites" />
                            </div>
                        </div>

                        <div className="flex min-w-0 flex-1 overflow-hidden bg-[linear-gradient(90deg,#d8e2f2_0px,#e9eef6_10px,#f8f8f8_30px)]">
                            <div className="min-w-0 flex-1 overflow-hidden whitespace-nowrap">
                                {TREE.map((item, i) => (
                                    <TreeRow
                                        key={i}
                                        item={item}
                                        selected={item.name === selected}
                                        onSelect={() => setSelected(item.name)}
                                    />
                                ))}
                            </div>
                            <div className="ml-0.5 h-[69%] w-2.5 shrink-0 rounded-b-full bg-[#666]" />
                            <div className="flex w-3 shrink-0 flex-col items-center bg-[#f0f0f0] pt-[3px]">
                                <ChevronUp size={14} color="#333" strokeWidth={1.5} />
                                <div className="mt-[390px] h-[50px] w-2.5 rounded-full bg-[#666]" />
                            </div>
                        </div>
                    </div>
                </aside>

                <div className="flex w-2.5 shrink-0 items-center border-r border-[#dadada] bg-[#fbfffb] pt-[18px]">
                    <SideHandle />
                </div>

                <main className="flex min-w-0 flex-1 flex-col">
                    <div className="flex h-[34px] shrink-0 items-center gap-[5px] border-b border-[#dadada] bg-[#fafafa] pl-2 pr-[11px]">
                        <button className="flex h-6 items-center gap-[3px] rounded border border-[#777] px-[5px] text-[#808080]">
                            <Line color="#111" width={1.5}><path d="M1.5 10.5L10 2l8.5 8.5M4 8.5V18h12V8.5M8 18v-5.5h4V18" /></Line>
                            Member Center
                        </button>
                        <button className="h-6 rounded border border-black px-[18px] font-bold">X30 Pro-ET3011.pcb</button>
                        <button aria-label="Close all" className="ml-auto">
                            <svg width="18" height="18" viewBox="0 0 18 18" fill="none"><path d="M1 15V2q0-1 1-1h14" stroke="#7d7d7d" strokeWidth="2" /><rect x="4" y="4" width="14" height="14" rx="2" fill="#7d7d7d" /><path d="M8 8l6 6M14 8l-6 6" stroke="#fff" strokeWidth="1.8" /></svg>
                        </button>
                    </div>
                    <div className="flex min-h-0 flex-1">
                        <div className="flex min-w-0 flex-1 flex-col">
                            <Toolbar />
                            <div className="min-h-0 flex-1"><BoardView /></div>
                        </div>
                        <div className="flex w-2.5 shrink-0 items-center border-l border-[#dadada] bg-[#fafafa] pt-[30px]">
                            <SideHandle flip />
                        </div>
                    </div>
                </main>
            </div>

            <footer className="flex h-5 shrink-0 items-center justify-center bg-[#0090da] text-[15px] leading-5 text-white font-['Liberation_Mono',monospace]">
                XZZ Schematics https://www.xzztools.com
            </footer>
        </div>
    );
};

export default App;
